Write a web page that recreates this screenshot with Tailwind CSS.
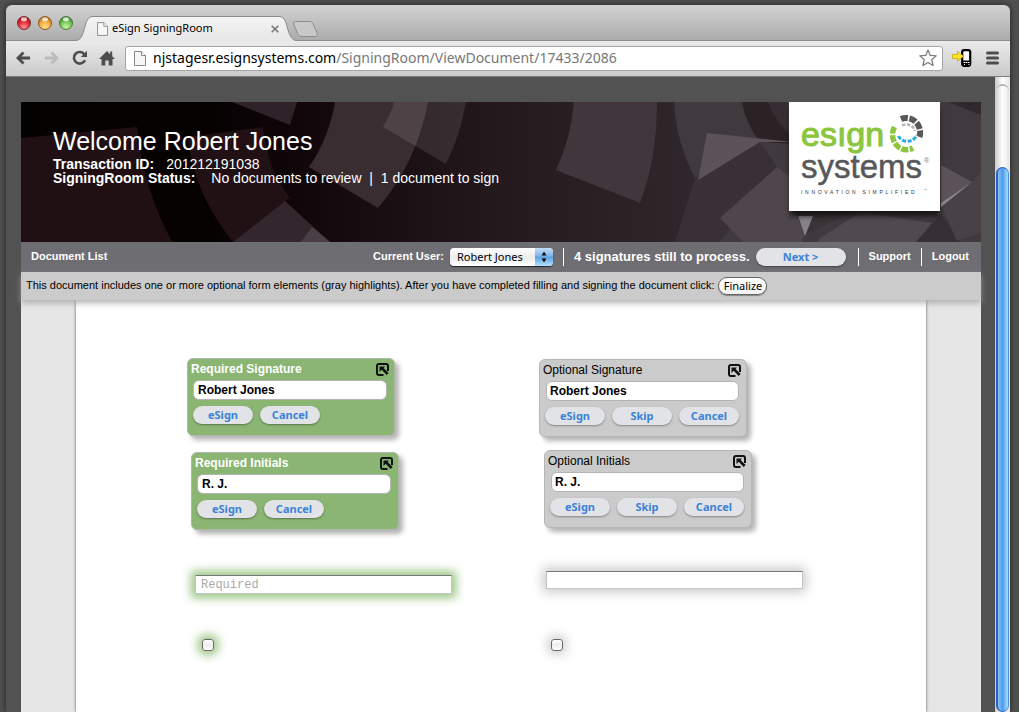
<!DOCTYPE html>
<html lang="en">
<head>
<meta charset="utf-8">
<meta name="viewport" content="width=device-width, initial-scale=1">
<title>eSign SigningRoom</title>
<script src="https://cdn.jsdelivr.net/npm/@tailwindcss/browser@4"></script>
</head>
<body class="flex min-h-screen flex-col bg-[#505050] pt-[5px] pr-[9px] pl-[6px] font-['Liberation_Sans',Arial,sans-serif] text-black">

<!-- Shared icon shapes -->
<svg class="hidden" aria-hidden="true">
  <symbol id="page" viewBox="0 0 12 15">
    <path d="M.5.5h7l4 4v10H.5z" fill="#f6f6f6" stroke="#888"/>
    <path d="M7.500.5v4h4" fill="#fff" stroke="#888"/>
  </symbol>
  <symbol id="pop" viewBox="0 0 13 13">
    <path d="M7.500 12H3a2 2 0 0 1-2-2V3a2 2 0 0 1 2-2h7a2 2 0 0 1 2 2v5" fill="none" stroke="#111" stroke-width="2"/>
    <path d="M3.500 3.500h5.500L7.600 4.900l5 5.200-1.900 1.900-5-5.200-2.200 2.200z" fill="#111"/>
  </symbol>
</svg>

<div class="flex flex-1 flex-col rounded-t-md bg-[#525252] shadow-[0_0_6px_rgba(0,0,0,0.6)]">

  <!-- Tab strip -->
  <header class="flex h-9 items-end rounded-t-md border-b border-[#8c8c8c] bg-linear-to-b from-[#d2d2d2] to-[#acacac]">
    <div class="flex h-full items-center gap-[6px] pl-[10px]">
      <svg class="h-4 w-[58px]" viewBox="0 0 58 16" aria-hidden="true">
        <defs>
          <radialGradient id="r" cx=".5" cy=".8" r=".8"><stop offset="0" stop-color="#ff8a8a"/><stop offset=".6" stop-color="#e0242c"/><stop offset="1" stop-color="#8c1015"/></radialGradient>
          <radialGradient id="y" cx=".5" cy=".8" r=".8"><stop offset="0" stop-color="#ffe68a"/><stop offset=".6" stop-color="#eea336"/><stop offset="1" stop-color="#9a5a12"/></radialGradient>
          <radialGradient id="g" cx=".5" cy=".8" r=".8"><stop offset="0" stop-color="#c8f5a0"/><stop offset=".6" stop-color="#6fbe4f"/><stop offset="1" stop-color="#34702a"/></radialGradient>
        </defs>
        <circle cx="8" cy="8" r="6.500" fill="url(#r)" stroke="#7c3030"/>
        <circle cx="29" cy="8" r="6.500" fill="url(#y)" stroke="#8a5c28"/>
        <circle cx="50" cy="8" r="6.500" fill="url(#g)" stroke="#4a7a3c"/>
        <g fill="#fff" fill-opacity=".75"><ellipse cx="8" cy="4.200" rx="3" ry="2"/><ellipse cx="29" cy="4.200" rx="3" ry="2"/><ellipse cx="50" cy="4.200" rx="3" ry="2"/></g>
      </svg>
    </div>
    <div class="relative -mb-px ml-[2px] h-[25px] w-[220px]">
      <svg class="absolute inset-0 h-full w-full" viewBox="0 0 220 25" aria-hidden="true">
        <defs><linearGradient id="tab" x2="0" y2="1"><stop offset="0" stop-color="#f4f4f4"/><stop offset="1" stop-color="#e6e6e6"/></linearGradient></defs>
        <path d="M0 24.500C5 24 6 20 8 14C10 7 11 .5 17 .5H203C209 .5 210 7 212 14C214 20 216 24 220 24.500V25H0z" fill="url(#tab)"/>
        <path d="M0 24.500C5 24 6 20 8 14C10 7 11 .5 17 .5H203C209 .5 210 7 212 14C214 20 216 24 220 24.500" fill="none" stroke="#8a8a8a"/>
      </svg>
      <div class="relative flex h-full items-center pr-[17px] pl-[21px]">
        <svg class="h-[14px] w-[11px]" aria-hidden="true"><use href="#page"/></svg>
        <span class="ml-1 flex-1 font-['Noto_Sans',sans-serif] text-[11px] whitespace-nowrap">eSign SigningRoom</span>
        <button aria-label="Close tab"><svg class="h-2 w-2" viewBox="0 0 8 8"><path d="M.7.7l6.600 6.600M7.300.7L.7 7.300" stroke="#777" stroke-width="1.600"/></svg></button>
      </div>
    </div>
    <button class="mb-[3px] -ml-[4px]" aria-label="New tab">
      <svg class="h-4 w-[27px]" viewBox="0 0 27 16"><path d="M3.500.5H17c2 0 3.500.8 4.200 2.500l4 9.500c.8 2-.2 3-2 3H10c-2 0-3.500-1-4.200-2.800L1.500 3C1 1.500 1.700.5 3.500.5z" fill="#c8c8c8" stroke="#8e8e8e"/></svg>
    </button>
  </header>

  <!-- Toolbar -->
  <div class="flex h-9 items-center border-b border-[#7d7d7d] bg-linear-to-b from-[#ebebeb] to-[#cacaca] pr-[11px] pb-px pl-[10px]">
    <button aria-label="Back"><svg class="h-[14px] w-[15px]" viewBox="0 0 15 14"><path d="M7.500 1.500L2 7l5.500 5.500M2.500 7H14" fill="none" stroke="#4d4d4d" stroke-width="2.800"/></svg></button>
    <button class="ml-[13px]" aria-label="Forward"><svg class="h-[14px] w-[15px]" viewBox="0 0 15 14"><path d="M7.500 1.500L13 7l-5.500 5.500M12.500 7H1" fill="none" stroke="#bcbcbc" stroke-width="2.800"/></svg></button>
    <button class="ml-[13px]" aria-label="Reload"><svg class="h-4 w-4" viewBox="0 0 16 16"><path d="M13 10.200A5.800 5.800 0 1 1 12.400 4.300" fill="none" stroke="#4d4d4d" stroke-width="2.600"/><path d="M15 .8V7H8.800z" fill="#4d4d4d"/></svg></button>
    <button class="ml-[11px]" aria-label="Home"><svg class="h-4 w-4" viewBox="0 0 16 16"><path d="M8 1l3.200 3.200V1.500h2v4.700L16 9h-2.500v6.500H9.700V10.500H6.300v5H2.500V9H0z" fill="#4d4d4d"/></svg></button>
    <div class="ml-[10px] flex h-[25px] flex-1 items-center rounded-[3px] border border-[#a4a4a4] bg-white pr-[5px] pl-2">
      <svg class="h-[15px] w-3" aria-hidden="true"><use href="#page"/></svg>
      <span class="ml-[7px] flex-1 font-['Noto_Sans',sans-serif] text-[14px] leading-[20px] text-[#777]"><span class="text-black">njstagesr.esignsystems.com</span>/SigningRoom/ViewDocument/17433/2086</span>
      <button aria-label="Bookmark"><svg class="h-[18px] w-[18px]" viewBox="0 0 18 18"><path d="M9 1l2.300 5.400 5.900.5-4.500 3.800 1.400 5.800L9 13.400l-5.100 3.100 1.400-5.800L.8 6.900l5.900-.5z" fill="#fff" stroke="#777" stroke-linejoin="round" stroke-width="1.200"/></svg></button>
    </div>
    <button class="ml-[9px]" aria-label="Send to phone"><svg class="h-[18px] w-5" viewBox="0 0 20 18"><rect x="10.200" y="1.200" width="8" height="15.600" rx="2" fill="#fff" stroke="#000" stroke-width="2.200"/><path d="M10 11.500h8.500V17H10z" fill="#000"/><path d="M11.500 13.500h1.500m3 0h1.500m-4 0h2m-3.500 2h1m3.500 0h1" stroke="#fff"/><path d="M.5 5.500h5V2.500l6 4.700-6 4.800V9.500h-5z" fill="#ffe52a" stroke="#c9a800" stroke-width=".8"/></svg></button>
    <button class="ml-[14px]" aria-label="Menu"><svg class="h-[14px] w-[13px]" viewBox="0 0 13 14"><path d="M1.500 2h10M1.500 7h10M1.500 12h10" stroke="#4d4d4d" stroke-width="3" stroke-linecap="round"/></svg></button>
  </div>

  <div class="flex flex-1">
    <div class="flex flex-1 flex-col pt-[25px] pr-[14px] pl-[15px]">

      <!-- Banner -->
      <section class="relative flex h-[140px] items-start justify-between overflow-hidden bg-[#150c0f] pr-[41px] pl-8 text-white">
        <svg class="absolute inset-0 h-full w-full" viewBox="0 0 960 140" preserveAspectRatio="none" aria-hidden="true">
          <defs>
            <linearGradient id="bg"><stop offset="0" stop-color="#040101"/><stop offset=".2" stop-color="#060202"/><stop offset=".3" stop-color="#12070b"/><stop offset=".5" stop-color="#241a1e"/><stop offset=".7" stop-color="#2f272b"/><stop offset="1" stop-color="#443d42"/></linearGradient>
          </defs>
          <path d="M0 0H960V140H0z" fill="url(#bg)"/>
          <path d="M0 36L116 25Q122 85 151 140H0z" fill="#201013"/>
          <path d="M167 35L242 25Q246 66 269 96L264 99L212 140Q172 90 167 35z" fill="#211115"/>
          <path d="M211 0H276L269 23z" fill="#2f2329"/>
          <path d="M314 0H407Q396 60 357 106L288 65Q308 36 314 0z" fill="#3a2d32"/>
          <path d="M373 0H445Q439 34 425 62L362 25Q370 12 373 0z" fill="#fff" fill-opacity=".1"/>
          <path d="M264 99L212 140H309z" fill="#33262c"/>
          <path d="M291 125L280 140H309z" fill="#4a3f44"/>
          <path d="M553 0H636Q636 56 619 101L535 68Q550 36 553 0z" fill="#40363b"/>
          <path d="M654 140Q672 112 674 76Q655 40 653 0H721Q725 22 739 40L767 36V0H960V140z" fill="#40393e"/>
          <path d="M721 0H747Q754 20 772 35V42L739 40Q725 22 721 0z" fill="#2b2226"/>
          <path d="M674 76L654 140H699L756 65L739 40z" fill="#393035"/>
          <path d="M686 31L772 40L739 40L677 78z" fill="#5b5359"/>
          <path d="M756 65L699 116L722 140H781L784 133L776 95L790 90z" fill="#4e464b"/>
          <path d="M770 100H850L784 133z" fill="#3a3337"/>
          <path d="M777 114H792L784 134z" fill="#85828a"/>
          <path d="M799 136L840 110L911 121L895 140H797z" fill="#50494e"/>
          <path d="M895 140L920 112L940 140z" fill="#363034"/>
          <path d="M927 0H960V13z" fill="#2f282c"/>
          <path d="M920 63L951 80L920 103z" fill="#5b5358"/>
          <path d="M951 80L960 70V131L936 139L920 103z" fill="#484146"/>
          <path d="M951 80L920 101V105z" fill="#8a868b"/>
        </svg>
        <div class="relative pt-6">
          <h1 class="text-[25px] leading-[30px]">Welcome Robert Jones</h1>
          <p class="mt-px flex gap-[12px] text-[14px] leading-[14px]"><b>Transaction ID:</b><span>201212191038</span></p>
          <p class="flex gap-[16px] text-[14px] leading-[14px]"><b>SigningRoom Status:</b><span class="whitespace-pre">No documents to review  |  1 document to sign</span></p>
        </div>
        <svg class="relative h-[109px] w-[151px] bg-white shadow-[0_6px_5px_-1px_rgba(20,15,18,0.9)]" viewBox="0 0 151 109" role="img" aria-label="esign systems, innovation simplified">
          <g font-family="'Liberation Sans', Arial, sans-serif">
            <text x="12" y="44" font-size="34" fill="#8cc63f" stroke="#8cc63f" stroke-width="1.100">esıgn</text>
            <text x="12" y="76" font-size="33" fill="#58585a" stroke="#58585a" stroke-width=".5">systems</text>
            <text x="135" y="61" font-size="7" fill="#777">®</text>
            <text x="12" y="92" font-size="5" letter-spacing="2.700" fill="#333">INNOVATION SIMPLIFIED</text>
            <text x="135" y="89" font-size="3" fill="#555">™</text>
          </g>
          <g fill="none">
            <path d="M112 17A14 14.500 0 0 1 130.500 35" stroke="#58585a" stroke-width="6" stroke-dasharray="7 1.500"/>
            <path d="M105.500 25A14 15 0 0 0 124 46" stroke="#8cc63f" stroke-width="5.500" stroke-dasharray="7 1.500"/>
            <path d="M113 23.500A9 9 0 0 1 126 29" stroke="#b5b5b5" stroke-width="2.500" stroke-dasharray="3.500 1.500"/>
            <path d="M109.500 34A9.500 8.500 0 0 0 127.500 33" stroke="#29abe2" stroke-width="3" stroke-dasharray="4 1.500"/>
          </g>
        </svg>
      </section>

      <!-- Navigation -->
      <nav class="flex h-[30px] items-center bg-[#6e6d72] px-[10px] pb-px text-[11px] leading-[15px] font-bold text-white">
        <a href="#" class="flex-1">Document List</a>
        <label for="user">Current User:</label>
        <div class="relative ml-[6px] h-[18px] w-[103px] overflow-hidden rounded-[4px] shadow-[0_1px_1px_rgba(0,0,0,0.7)]">
          <select id="user" class="h-full w-full appearance-none bg-linear-to-b from-white via-[#ececec] to-white pl-[7px] font-['Noto_Sans',sans-serif] text-[11px] font-normal text-black"><option>Robert Jones</option></select>
          <svg class="pointer-events-none absolute top-0 right-0 h-[18px] w-[18px]" viewBox="0 0 18 18" aria-hidden="true">
            <defs><linearGradient id="cap" x2="0" y2="1"><stop offset="0" stop-color="#c5dff6"/><stop offset=".45" stop-color="#7db4ea"/><stop offset=".5" stop-color="#5c9fe2"/><stop offset="1" stop-color="#b5e2ff"/></linearGradient></defs>
            <path d="M0 0H18V18H0z" fill="url(#cap)"/>
            <path d="M9 3.500L11.500 7.500h-5zM9 14.500L6.500 10.500h5z" fill="#111"/>
          </svg>
        </div>
        <span class="ml-[10px] h-[18px] w-px bg-white"></span>
        <span class="ml-[10px] text-[13px]">4 signatures still to process.</span>
        <button class="ml-[6px] h-[18px] w-[90px] rounded-full bg-[#e2e3e6] font-['Noto_Sans',sans-serif] text-[11px] font-bold text-[#3b82d8] shadow-[0_1px_2px_rgba(0,0,0,0.4)]">Next &gt;</button>
        <span class="ml-[12px] h-[18px] w-px bg-white"></span>
        <a href="#" class="ml-[10px]">Support</a>
        <span class="ml-[10px] h-[18px] w-px bg-white"></span>
        <a href="#" class="mr-[2px] ml-[10px]">Logout</a>
      </nav>

      <!-- Notice -->
      <div class="relative flex h-[28px] items-center bg-[#cbcbcb] pb-px pl-[5px] text-[11px] leading-[15px] shadow-[0_3px_6px_rgba(160,160,160,0.8)]">
        <p>This document includes one or more optional form elements (gray highlights). After you have completed filling and signing the document click:</p>
        <button class="ml-1 h-[18px] w-[49px] rounded-full border border-[#666] bg-linear-to-b from-white to-[#f2f2f2] font-['Noto_Sans',sans-serif] text-[11px] leading-[14px] whitespace-nowrap shadow-[0_1px_1px_rgba(0,0,0,0.35)]">Finalize</button>
      </div>

      <!-- Document -->
      <main class="flex flex-1 bg-[#e6e6e6] px-[55px]">
        <div class="flex flex-1 bg-white pl-[111px] shadow-[0_0_3px_rgba(0,0,0,0.6)]">

          <div class="flex w-[352px] flex-col items-start pt-[58px]">
            <section class="h-[78px] w-[208px] rounded-[6px] border border-[#aeb8aa] bg-[#8ab573] pt-[2px] text-[12px] shadow-[4px_4px_5px_rgba(0,0,0,0.3)]">
              <div class="flex h-4 items-center justify-between pr-[5px] pl-[3px]">
                <label for="rs" class="font-bold text-white">Required Signature</label>
                <button aria-label="Move required signature"><svg class="h-[13px] w-[13px]"><use href="#pop"/></svg></button>
              </div>
              <input id="rs" value="Robert Jones" class="mt-[3px] ml-[5px] block h-5 w-[194px] rounded-[6px] border border-[#b4b4b4] bg-white px-1 font-bold">
              <div class="mt-[6px] flex gap-[7px] pl-[5px] font-['Noto_Sans',sans-serif] text-[11px] font-bold text-[#3b82d8]">
                <button class="h-[18px] w-[60px] rounded-full bg-[#e2e3e6] shadow-[0_1px_2px_rgba(0,0,0,0.35)]">eSign</button>
                <button class="h-[18px] w-[60px] rounded-full bg-[#e2e3e6] shadow-[0_1px_2px_rgba(0,0,0,0.35)]">Cancel</button>
              </div>
            </section>
            <section class="mt-[16px] ml-1 h-[78px] w-[208px] rounded-[6px] border border-[#aeb8aa] bg-[#8ab573] pt-[2px] text-[12px] shadow-[4px_4px_5px_rgba(0,0,0,0.3)]">
              <div class="flex h-4 items-center justify-between pr-[5px] pl-[3px]">
                <label for="ri" class="font-bold text-white">Required Initials</label>
                <button aria-label="Move required initials"><svg class="h-[13px] w-[13px]"><use href="#pop"/></svg></button>
              </div>
              <input id="ri" value="R. J." class="mt-[3px] ml-[5px] block h-5 w-[194px] rounded-[6px] border border-[#b4b4b4] bg-white px-1 font-bold">
              <div class="mt-[6px] flex gap-[7px] pl-[5px] font-['Noto_Sans',sans-serif] text-[11px] font-bold text-[#3b82d8]">
                <button class="h-[18px] w-[60px] rounded-full bg-[#e2e3e6] shadow-[0_1px_2px_rgba(0,0,0,0.35)]">eSign</button>
                <button class="h-[18px] w-[60px] rounded-full bg-[#e2e3e6] shadow-[0_1px_2px_rgba(0,0,0,0.35)]">Cancel</button>
              </div>
            </section>
            <input aria-label="Required text" placeholder="Required" class="mt-[45px] ml-[8px] h-[19px] w-[257px] border border-[#c4c4c4] border-t-[#777] bg-white px-[5px] font-['Liberation_Mono',monospace] text-[12px] shadow-[0_0_10px_4px_rgba(122,178,90,0.75)] placeholder:text-[#a9a9a9]">
            <input type="checkbox" aria-label="Required choice" class="mt-[45px] ml-[15px] h-3 w-3 appearance-none rounded-[3px] border border-[#6a6a6a] bg-linear-to-b from-white via-[#ececec] to-white shadow-[0_0_10px_4px_rgba(122,178,90,0.75)]">
          </div>

          <div class="flex flex-1 flex-col items-start pt-[59px]">
            <section class="h-[78px] w-[208px] rounded-[6px] border border-[#b6b6b6] bg-[#cbcbcb] pt-[2px] text-[12px] shadow-[4px_4px_5px_rgba(0,0,0,0.3)]">
              <div class="flex h-4 items-center justify-between pr-[5px] pl-[3px]">
                <label for="os">Optional Signature</label>
                <button aria-label="Move optional signature"><svg class="h-[13px] w-[13px]"><use href="#pop"/></svg></button>
              </div>
              <input id="os" value="Robert Jones" class="mt-[3px] ml-[6px] block h-5 w-[193px] rounded-[6px] border border-[#b4b4b4] bg-white px-[3px] font-bold">
              <div class="mt-[6px] flex gap-[7px] pl-[5px] font-['Noto_Sans',sans-serif] text-[11px] font-bold text-[#3b82d8]">
                <button class="h-[18px] w-[60px] rounded-full bg-[#e2e3e6] shadow-[0_1px_2px_rgba(0,0,0,0.35)]">eSign</button>
                <button class="h-[18px] w-[60px] rounded-full bg-[#e2e3e6] shadow-[0_1px_2px_rgba(0,0,0,0.35)]">Skip</button>
                <button class="h-[18px] w-[60px] rounded-full bg-[#e2e3e6] shadow-[0_1px_2px_rgba(0,0,0,0.35)]">Cancel</button>
              </div>
            </section>
            <section class="mt-[13px] ml-[5px] h-[78px] w-[208px] rounded-[6px] border border-[#b6b6b6] bg-[#cbcbcb] pt-[2px] text-[12px] shadow-[4px_4px_5px_rgba(0,0,0,0.3)]">
              <div class="flex h-4 items-center justify-between pr-[5px] pl-[3px]">
                <label for="oi">Optional Initials</label>
                <button aria-label="Move optional initials"><svg class="h-[13px] w-[13px]"><use href="#pop"/></svg></button>
              </div>
              <input id="oi" value="R. J." class="mt-[3px] ml-[6px] block h-5 w-[193px] rounded-[6px] border border-[#b4b4b4] bg-white px-[3px] font-bold">
              <div class="mt-[6px] flex gap-[7px] pl-[5px] font-['Noto_Sans',sans-serif] text-[11px] font-bold text-[#3b82d8]">
                <button class="h-[18px] w-[60px] rounded-full bg-[#e2e3e6] shadow-[0_1px_2px_rgba(0,0,0,0.35)]">eSign</button>
                <button class="h-[18px] w-[60px] rounded-full bg-[#e2e3e6] shadow-[0_1px_2px_rgba(0,0,0,0.35)]">Skip</button>
                <button class="h-[18px] w-[60px] rounded-full bg-[#e2e3e6] shadow-[0_1px_2px_rgba(0,0,0,0.35)]">Cancel</button>
              </div>
            </section>
            <input aria-label="Optional text" class="mt-[43px] ml-[7px] h-[18px] w-[257px] border border-[#c4c4c4] border-t-[#777] bg-white px-[5px] font-['Liberation_Mono',monospace] text-[12px] shadow-[0_0_12px_3px_rgba(0,0,0,0.22)]">
            <input type="checkbox" aria-label="Optional choice" class="mt-[50px] ml-[12px] h-3 w-3 appearance-none rounded-[3px] border border-[#6a6a6a] bg-linear-to-b from-white via-[#ececec] to-white shadow-[0_0_12px_3px_rgba(0,0,0,0.22)]">
          </div>
        </div>
      </main>
    </div>

    <!-- Scrollbar -->
    <div class="flex w-[15px] flex-col bg-linear-to-r from-[#c9c9c9] via-white to-[#e4e4e4] px-px pt-[7px]" aria-hidden="true">
      <div class="h-[83px] rounded-t-full border-t-2 border-[#b5b5b5]"></div>
      <div class="flex-1 rounded-full border border-l-2 border-[#2a62c8] border-r-[#4a90d8] bg-linear-to-r from-[#8fc0f2] via-[#4b9bea] via-45% to-[#a5e0ff]"></div>
    </div>
  </div>
</div>
</body>
</html>
